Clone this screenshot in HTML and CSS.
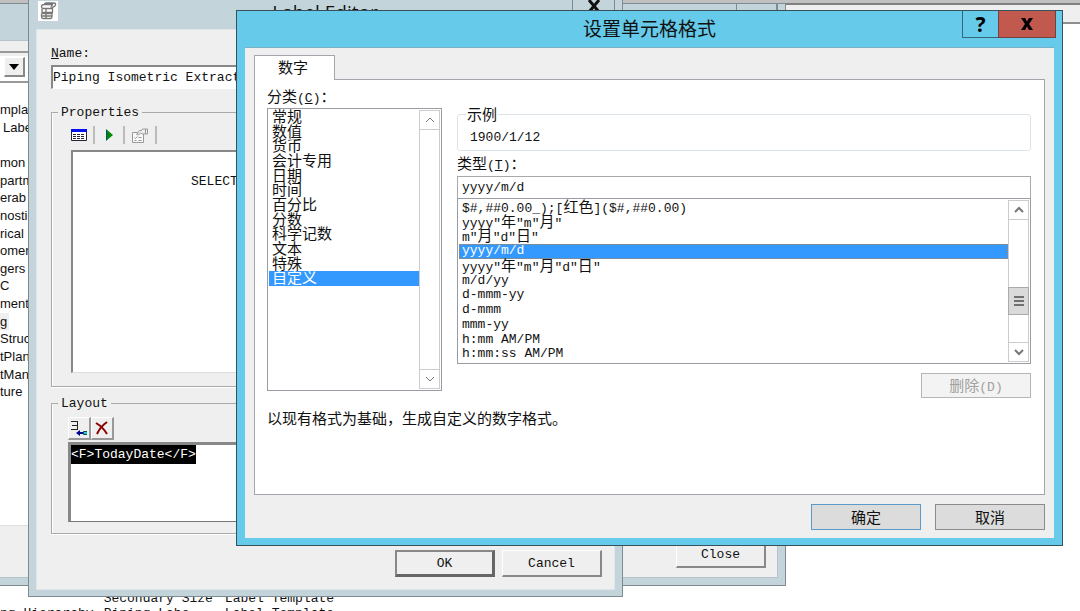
FILE: index.html
```html
<!DOCTYPE html>
<html lang="zh-CN">
<head>
<meta charset="utf-8">
<title>设置单元格格式</title>
<link rel="stylesheet" href="styles.css">
</head>
<body>
<main class="desktop">
  <div class="app-bar"></div>
  <table class="report">
    <tr><td class="col-a"></td><td class="col-b">Secondary Size</td><td>Label Template</td></tr>
    <tr><td class="col-a">ng Hierarchy</td><td class="col-b">Piping Labe...</td><td>Label Template</td></tr>
  </table>

  <section class="window browser" aria-label="Labels">
    <header class="browser-title"><span class="cap-cell"></span><span class="cap-cell cap-close"></span></header>
    <div class="browser-body">
      <div class="combo"><button class="combo-btn" aria-label="Open list"><svg width="10" height="6" viewBox="0 0 10 6"><path d="M0 0h10L5 6z"/></svg></button></div>
      <ul class="tree">
        <li>mpla</li><li class="child">Labels</li><li></li><li>mon</li><li>partm</li><li>erab</li><li>nostic</li><li>rical</li><li>oment</li><li>gers a</li><li>C</li><li>ment</li><li><span class="current">g</span></li><li>Struct</li><li>tPlan</li><li>tMan</li><li>ture</li>
      </ul>
      <footer class="browser-foot"><button class="classic">Close</button></footer>
    </div>
  </section>

  <section class="window editor" aria-label="Label Editor">
    <header class="editor-title">
      <svg class="app-icon" width="20" height="20" viewBox="0 0 20 20"><path fill="#fff" d="M0 0h20v20H0z"/><g fill="none" stroke="#777" stroke-width="1.3"><path d="M6 3.500q1-1.500 2-1.500h8q2 0 1.500 2t-3 2M6 3.500h9q-2 1-2 3M6 3.500q-2.500 0-2.500 2t1.500 2h8q2 0 2-2M4 8v3.500q0 1 1 1h8q1.500 0 1.500-1V6M3.500 12.500v3q0 2 1.500 2h7.500q1.500 0 1.500-2v-4M4 11.500h10M4 15h10M8 7.500v10"/></g></svg>
      <h1>Label Editor</h1>
      <button class="editor-close" aria-label="Close"><svg width="14" height="12" viewBox="0 0 14 12"><path d="M2 0l10 12M12 0L2 12" stroke="#111" stroke-width="3"/></svg></button>
    </header>
    <div class="editor-body">
      <label class="name-label" for="name"><u>N</u>ame:</label>
      <input class="name-input" id="name" value="Piping Isometric Extraction">
      <fieldset class="group group-props">
        <legend>Properties</legend>
        <div class="toolbar">
          <button class="tool" aria-label="Table"><svg width="16" height="12" viewBox="0 0 16 12"><path fill="#fff" d="M0 0h16v12H0z"/><path fill="none" stroke="#223" d="M.5.5h15v11H.5z"/><path fill="#0010ee" d="M0 0h16v3H0z"/><path stroke="#223" stroke-dasharray="3 1" d="M2 5.500h12M2 7.500h12M2 9.500h12"/></svg></button>
          <button class="tool play" aria-label="Run"><svg width="7" height="12" viewBox="0 0 7 12"><path fill="#008a00" d="M0 0l7 6-7 6z"/><path stroke="#12438a" d="M.5 1v10"/></svg></button>
          <button class="tool wide" aria-label="Properties" disabled><svg width="16" height="15" viewBox="0 0 16 15"><g fill="none" stroke="#999"><path fill="#f8f8f8" d="M.5 4.500h11v10H.5zM2.500 9.500l1 1 2-2M6.500 9.500h3M2.500 12.500h2M6.500 12.500h3"/><path fill="#eee" d="M4.500 6.500l3-4h2l1-1.500h3v5h-3l-2-1-2 2z"/><path d="M13.500 1h2v5h-2"/></g></svg></button>
        </div>
        <div class="query">SELECT</div>
      </fieldset>
      <fieldset class="group group-layout">
        <legend>Layout</legend>
        <div class="layout-tools">
          <button class="raised" aria-label="Insert field"><svg width="18" height="17" viewBox="0 0 18 17"><path fill="none" stroke="#222" d="M1 1.500h7M2 5.500h6M1 9.500h7M7.500 1v9"/><path fill="#000090" d="M6 13l4-3v2h3v2h-3v2z"/><path fill="#29c9d4" stroke="#055" d="M17 11.500h-3.500v3H17"/></svg></button>
          <button class="raised" aria-label="Delete"><svg width="16" height="16" viewBox="0 0 16 16"><path fill="none" stroke="#8b0000" stroke-width="2" d="M2 3q7 4 11 11M13 2Q6 7 3 14"/></svg></button>
        </div>
        <div class="layout-text"><mark>&lt;F&gt;TodayDate&lt;/F&gt;</mark></div>
      </fieldset>
      <div class="editor-actions"><button class="classic default">OK</button><button class="classic">Cancel</button></div>
    </div>
  </section>

  <section class="dialog" role="dialog" aria-labelledby="dialog-title">
    <header class="dialog-title">
      <h2 id="dialog-title">设置单元格格式</h2>
      <div class="caption">
        <button class="help" aria-label="Help">?</button>
        <button class="close" aria-label="Close"><svg width="14" height="12" viewBox="0 0 14 12"><path fill="#000" d="M1 0h4l2 3.500L9 0h4L9 6l4 6H9L7 8.500 5 12H1l4-6z"/></svg></button>
      </div>
    </header>
    <div class="dialog-body">
      <div role="tablist"><button class="tab" role="tab" aria-selected="true">数字</button></div>
      <div class="panel" role="tabpanel">
        <div class="columns">
          <div class="category">
            <div class="caption-line" id="cat-label">分类<span class="latin">(<u>C</u>)</span>：</div>
            <div class="listbox cat-list">
              <ul class="options cat-options" role="listbox" aria-labelledby="cat-label">
                <li role="option">常规</li><li role="option">数值</li><li role="option">货币</li><li role="option">会计专用</li><li role="option">日期</li><li role="option">时间</li><li role="option">百分比</li><li role="option">分数</li><li role="option">科学记数</li><li role="option">文本</li><li role="option">特殊</li><li role="option" aria-selected="true">自定义</li>
              </ul>
              <div class="scroll">
                <button aria-label="Up"><svg width="12" height="8" viewBox="0 0 12 8"><path d="M2 6l4-4 4 4"/></svg></button>
                <button aria-label="Down"><svg width="12" height="8" viewBox="0 0 12 8"><path d="M2 2l4 4 4-4"/></svg></button>
              </div>
            </div>
          </div>
          <div class="format">
            <fieldset class="sample"><legend>示例</legend><output class="latin">1900/1/12</output></fieldset>
            <label class="caption-line" for="type">类型<span class="latin">(<u>T</u>)</span>：</label>
            <input class="type-input" id="type" value="yyyy/m/d">
            <div class="listbox type-list">
              <ul class="options type-options latin" role="listbox" aria-label="类型">
                <li role="option">$#,##0.00_);[<span class="han">红色</span>]($#,##0.00)</li>
                <li role="option">yyyy"<span class="han">年</span>"m"<span class="han">月</span>"</li>
                <li role="option">m"<span class="han">月</span>"d"<span class="han">日</span>"</li>
                <li role="option" aria-selected="true">yyyy/m/d</li>
                <li role="option">yyyy"<span class="han">年</span>"m"<span class="han">月</span>"d"<span class="han">日</span>"</li>
                <li role="option">m/d/yy</li><li role="option">d-mmm-yy</li><li role="option">d-mmm</li><li role="option">mmm-yy</li><li role="option">h:mm AM/PM</li><li role="option">h:mm:ss AM/PM</li>
              </ul>
              <div class="scroll">
                <button aria-label="Up"><svg width="12" height="8" viewBox="0 0 12 8"><path d="M2 6l4-4 4 4"/></svg></button>
                <div class="track"><span class="thumb"></span></div>
                <button aria-label="Down"><svg width="12" height="8" viewBox="0 0 12 8"><path d="M2 2l4 4 4-4"/></svg></button>
              </div>
            </div>
            <button class="flat delete" disabled>删除<span class="latin">(D)</span></button>
          </div>
        </div>
        <p class="hint">以现有格式为基础，生成自定义的数字格式。</p>
      </div>
      <footer class="dialog-actions"><button class="flat primary">确定</button><button class="flat">取消</button></footer>
    </div>
  </section>
</main>
</body>
</html>
```
FILE: styles.css
```css
* { box-sizing: border-box; }
body, ul, h1, h2, p, fieldset { margin: 0; padding: 0; }
ul { list-style: none; }
body { background: #fff; color: #111; font: 13px/16px "Liberation Mono", "Noto Sans CJK SC", monospace; }
button, input { font: inherit; color: inherit; margin: 0; padding: 0; border-radius: 0; }
button { display: flex; align-items: center; justify-content: center; }
fieldset { min-width: 0; }
.desktop { position: relative; height: 100vh; overflow: hidden; display: flex; flex-direction: column; justify-content: space-between; }
.app-bar { height: 24px; background: #efefef; border-top: 3px solid #c0c0c0; border-bottom: 2px solid #8e8e8e; box-shadow: inset 0 2px #808080; }
.report { border-collapse: collapse; white-space: pre; margin-bottom: -10px; align-self: flex-start; }
.report td { padding: 0; line-height: 15px; }
.report .col-a { min-width: 103px; padding-right: 10px; text-align: right; }
.report .col-b { padding-right: 12px; }

.window { position: absolute; display: flex; flex-direction: column; background: #c3d5db; border: 1px solid #7f8a91; }
.browser { left: -9px; top: 3px; width: 795px; height: 583px; padding: 0 7px 7px; }
.browser-title { height: 36px; flex: none; display: flex; justify-content: flex-end; }
.cap-cell { height: 20px; width: 41px; border-left: 1px solid #7f8a91; border-right: 1px solid #7f8a91; }
.cap-close { width: 1px; border-left: 0; }
.browser-body { flex: 1; min-height: 0; display: flex; flex-direction: column; background: #efefef; border: 1px solid #b4c4ca; padding-top: 10px; }
.combo { height: 32px; flex: none; border-top: 2px solid #999; border-bottom: 2px solid #999; padding: 4px 0 0 4px; background: linear-gradient(#efefef 3px, #fff 3px); }
.combo-btn { width: 21px; height: 20px; background: #efefef; border: 1px solid #fff; border-right: 2px solid #888; border-bottom: 2px solid #888; }
.tree { flex: 1; min-height: 0; background: #fff; border-bottom: 1px solid #ddd; padding: 18px 0 124px; display: grid; grid-template-rows: repeat(17, minmax(0, 1fr)); font: 13px/17px "Liberation Sans", sans-serif; white-space: nowrap; }
.tree .child { padding-left: 3px; }
.current { display: inline-block; background: #efefef; padding-right: 2px; }
.browser-foot { height: 51px; flex: none; padding: 15px 11px 8px; display: flex; justify-content: flex-end; }
.browser-foot .classic { width: 90px; }

.editor { left: 28px; top: -1px; width: 595px; height: 598px; padding: 0 7px 7px; }
.editor-title { height: 29px; flex: none; display: flex; align-items: flex-start; }
.app-icon { margin: 1px 0 0 2px; }
.editor-title h1 { flex: 1; text-align: center; font: 19px/24px "Open Sans", sans-serif; padding-left: 20px; }
.editor-close { width: 43px; height: 12px; background: none; border: 1px solid #7f8a91; border-width: 0 1px; }
.editor-body { flex: 1; display: flex; flex-direction: column; background: #efefef; border: 1px solid #dfe6e8; padding: 15px 12px 12px 14px; }
.name-label { align-self: flex-start; line-height: 18px; }
.name-input { height: 24px; margin: 2px 0 14px; padding: 0; background: #fff; border: 2px solid #888; border-right-color: #eee; border-bottom: 1px solid #fff; }
.group { border: 1px solid #aaa; box-shadow: inset 1px 0 #fff, 0 1px #fff; }
.group legend { padding: 2px 3px 0; }
.group-props { height: 284px; margin-bottom: 7px; padding: 5px 19px 0; }
.group-props legend { margin-left: -13px; }
.toolbar { display: flex; height: 18px; margin-bottom: 6px; }
.tool { background: none; border: 0; border-right: 2px solid #bbb; width: 24px; justify-content: flex-start; }
.play { width: 30px; padding-left: 11px; }
.wide { width: 32px; padding-left: 7px; }
.query { height: 223px; background: #fff; border: 2px solid #888; border-right: 0; border-bottom: 1px solid #ddd; padding: 22px 0 0 118px; }
.group-layout { height: 140px; margin-bottom: 16px; padding: 5px 16px 0; }
.group-layout legend { margin-left: -10px; }
.layout-tools { display: flex; }
.raised { width: 23px; height: 23px; background: #efefef; border: 1px solid #fff; border-right: 2px solid #999; border-bottom: 2px solid #999; }
.layout-text { height: 80px; margin-top: 2px; background: #fff; border: 3px solid #888; border-right: 0; border-bottom: 1px solid #777; }
.layout-text mark { display: inline-block; background: #000; color: #fff; padding: 2px 0 1px; }
.editor-actions { display: flex; justify-content: flex-end; gap: 7px; }
.classic { width: 100px; height: 27px; padding-top: 2px; background: #efefef; border: 1px solid #fff; border-right: 2px solid #888; border-bottom: 2px solid #888; }
.default { border: 2px solid #888; border-right: 3px solid #666; border-bottom: 3px solid #666; }

.dialog { position: absolute; left: 236px; top: 10px; width: 827px; height: 536px; display: flex; flex-direction: column; background: #66caea; border: 1px solid #36505c; padding: 0 8px 7px; font-family: "Noto Sans CJK SC", sans-serif; font-size: 15px; }
.dialog-title { height: 36px; flex: none; display: grid; position: relative; }
.dialog-title h2 { font: 19px/34px "Noto Sans CJK SC", sans-serif; text-align: center; }
.caption { position: absolute; top: 0; right: -2px; display: flex; }
.caption button { height: 27px; border: 1px solid #356779; border-top: 0; background: #66caea; }
.caption .help { width: 36px; border-right: 0; font: bold 21px/26px "Noto Sans", sans-serif; color: #000; }
.caption .close { width: 58px; background: #c1594f; border-color: #733f40; }
.dialog-body { flex: 1; display: flex; flex-direction: column; background: #efefef; border-top: 1px solid #78afc4; padding: 7px 9px 8px; }
.tab { position: relative; z-index: 1; width: 81px; height: 25px; margin-bottom: -1px; background: #fff; border: 1px solid #a5a5ad; border-bottom: 0; padding: 0 3px 2px 0; }
.panel { flex: 1; background: #fff; border: 1px solid #a5a5ad; padding: 8px 13px 0 12px; margin-bottom: 9px; }
.columns { display: grid; grid-template-columns: 175px minmax(0, 1fr); column-gap: 15px; }
.caption-line { display: block; height: 18px; line-height: 16px; }
.latin { font-family: "Liberation Mono", monospace; font-size: 13px; }
.han { font-family: "Noto Sans CJK SC", sans-serif; font-size: 15px; }
.listbox { display: flex; background: #fff; border: 1px solid #999ca3; padding: 1px; }
.cat-list { height: 283px; margin-top: 2px; }
.options { flex: 1; display: grid; line-height: 12px; white-space: pre; }
.options li { padding-left: 3px; }
.options [aria-selected="true"] { background: #3399ff; color: #fff; }
.cat-options { height: 176px; grid-template-rows: repeat(12, minmax(0, 1fr)); }
.type-options { height: 162px; line-height: 14px; grid-template-rows: repeat(11, minmax(0, 1fr)); }
.type-options .han { line-height: 12px; }
.type-options [aria-selected="true"] { outline: 1px dotted #c08040; outline-offset: -1px; }
.scroll { width: 21px; display: flex; flex-direction: column; justify-content: space-between; border: 1px solid #ccc; }
.scroll button { height: 19px; background: #fff; border: 0; border-bottom: 1px solid #ccc; }
.scroll button:last-child { border-bottom: 0; border-top: 1px solid #ccc; }
.scroll path { fill: none; stroke: #777; stroke-width: 2; }
.cat-list .scroll path { stroke-width: 1; }
.track { flex: 1; display: flex; flex-direction: column; justify-content: flex-end; padding-bottom: 27px; }
.thumb { height: 28px; margin: 0 -1px; border: 1px solid #aaa; background: linear-gradient(#707070 2px, transparent 2px 4px, #707070 4px 6px, transparent 6px 8px, #707070 8px 10px) center / 10px 10px no-repeat #dadada; }
.format { display: flex; flex-direction: column; padding-top: 18px; }
.sample { height: 45px; border: 1px solid #dce5ea; border-radius: 3px; padding: 8px 12px 0; line-height: 16px; margin-bottom: 4px; }
.sample legend { margin-left: -4px; padding: 0 1px; }
.sample output { display: block; }
.type-input { width: 100%; height: 22px; margin-top: 3px; border: 1px solid #aaa; border-bottom: 0; padding: 0 4px; font: 13px/18px "Liberation Mono", monospace; background: #fff; }
.type-list { height: 166px; }
.flat { width: 110px; height: 26px; background: #dcdcdc; border: 1px solid #8b8b8b; }
.delete { display: block; line-height: 22px; align-self: flex-end; margin-top: 9px; height: 25px; background: #f3f3f3; border-color: #b5b5b5; color: #a0a0a0; }
.hint { line-height: 18px; margin-top: 11px; }
.dialog-actions { display: flex; justify-content: flex-end; gap: 14px; }
.primary { border-color: #5b9bc9; }
```
